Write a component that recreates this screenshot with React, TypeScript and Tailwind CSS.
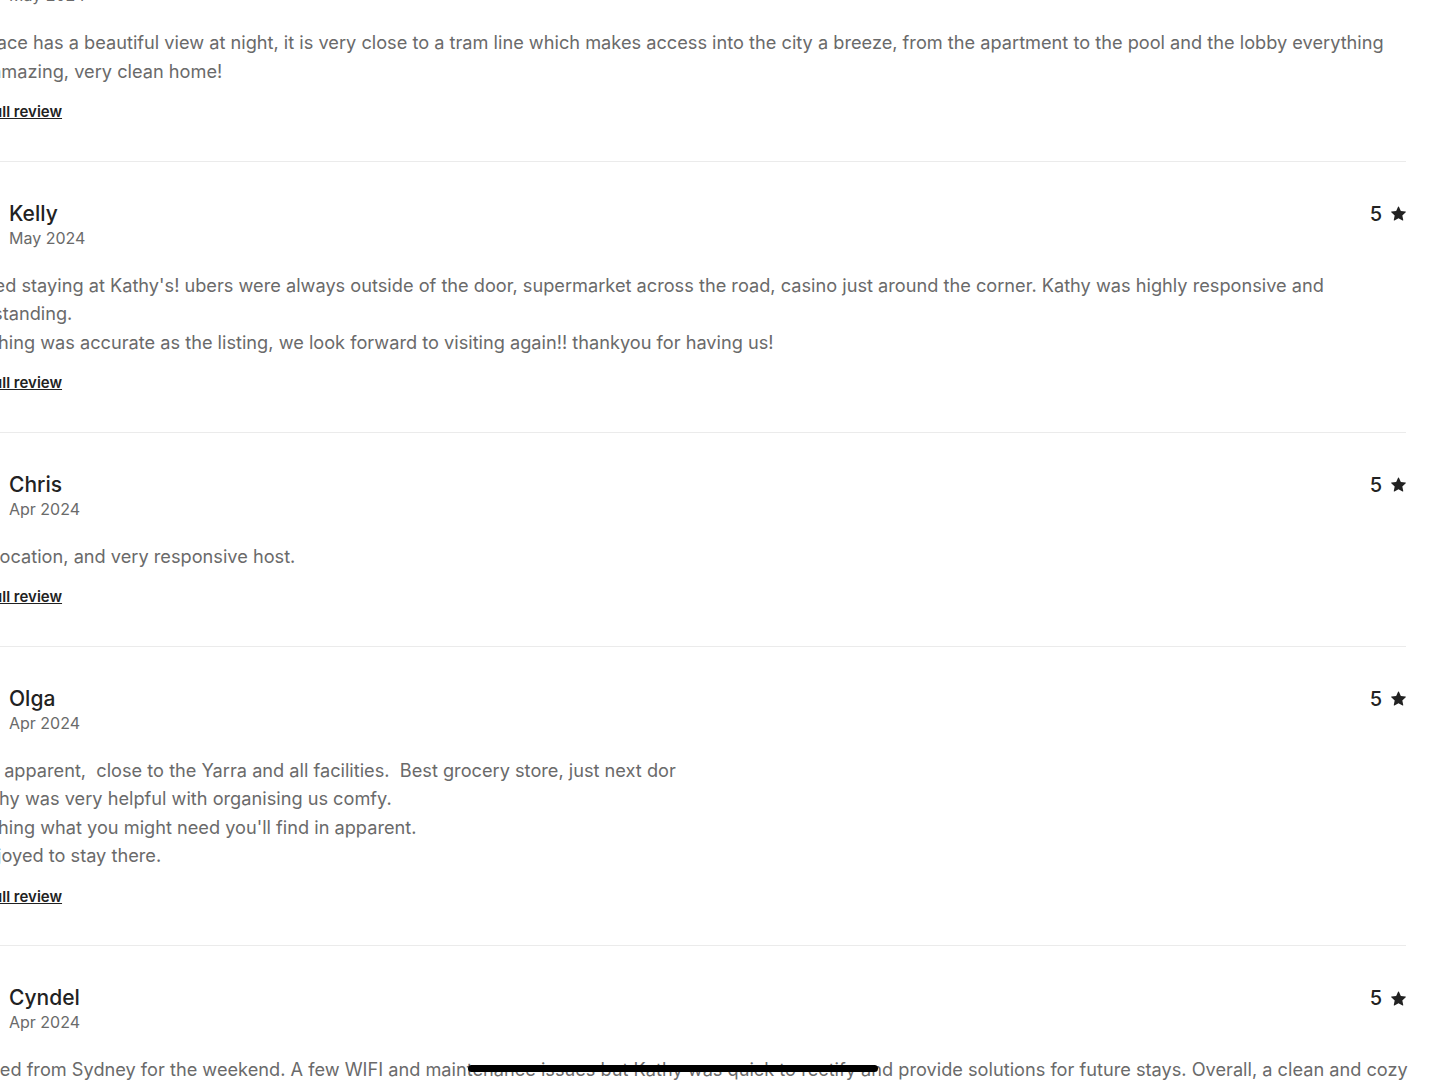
const REVIEWS = [
  {
    name: "Mitchell",
    date: "May 2024",
    rating: 5,
    body: "The place has a beautiful view at night, it is very close to a tram line which makes access into the city a breeze, from the apartment to the pool and the lobby everything\nTruly amazing, very clean home!",
  },
  {
    name: "Kelly",
    date: "May 2024",
    rating: 5,
    body: " Enjoyed staying at Kathy's! ubers were always outside of the door, supermarket across the road, casino just around the corner. Kathy was highly responsive and understanding.\nEverything was accurate as the listing, we look forward to visiting again!! thankyou for having us!",
  },
  {
    name: "Chris",
    date: "Apr 2024",
    rating: 5,
    body: "Great location, and very responsive host.",
  },
  {
    name: "Olga",
    date: "Apr 2024",
    rating: 5,
    body: "Lovely apparent,  close to the Yarra and all facilities.  Best grocery store, just next dor\nSo Kathy was very helpful with organising us comfy.\nEverything what you might need you'll find in apparent.\nWe enjoyed to stay there.",
  },
  {
    name: "Cyndel",
    date: "Apr 2024",
    rating: 5,
    body: "Travelled from Sydney for the weekend. A few WIFI and maintenance issues but Kathy was quick to rectify and provide solutions for future stays. Overall, a clean and cozy apartment with everything we needed for a short stay in the city.",
  },
]

const Star = () => (
  <svg viewBox="0 0 32 32" className="h-[15px] w-[15px] fill-[#222222]">
    <path d="M15.1 1.58l-4.13 8.88-9.86 1.27a1 1 0 0 0-.54 1.74l7.3 6.57-1.97 9.85a1 1 0 0 0 1.48 1.06l8.62-5 8.63 5a1 1 0 0 0 1.48-1.06l-1.97-9.85 7.3-6.57a1 1 0 0 0-.55-1.73l-9.86-1.28-4.12-8.88a1 1 0 0 0-1.82 0z" />
  </svg>
)

const Review = ({ review }: { review: (typeof REVIEWS)[number] }) => (
  <div className="border-b border-[#ebebeb] pt-[39px] pb-[37.5px]">
    <div className="flex items-start justify-between">
      <div className="flex items-center gap-[18px]">
        <div className="h-12 w-12 rounded-full bg-[#dddddd]" />
        <div className="flex flex-col">
          <span className="text-[21px] leading-[26px] font-medium text-[#222222]">
            {review.name}
          </span>
          <span className="text-[16px] leading-[22px] text-[#6a6a6a]">
            {review.date}
          </span>
        </div>
      </div>
      <div className="flex h-[26px] items-center gap-[9px]">
        <span className="text-[20px] font-medium text-[#222222]">{review.rating}</span>
        <Star />
      </div>
    </div>
    <p className="mt-[22px] mr-[-8px] whitespace-pre-wrap text-[18.2px] leading-[28.5px] text-[#6a6a6a]">
      {review.body}
    </p>
    <button className="mt-[16px] block text-[15px] leading-[22px] font-semibold text-[#222222] underline">
      Show full review
    </button>
  </div>
)

export default function App() {
  return (
    <div className="relative h-[1080px] w-[1440px] overflow-hidden bg-white font-['Inter',sans-serif]">
      <div className="ml-[-57px] mt-[-81px] w-[1463px]">
        {REVIEWS.map((review) => (
          <Review key={review.name} review={review} />
        ))}
      </div>
      <div className="absolute left-[468px] top-[1065px] h-[7px] w-[410px] rounded-full bg-black" />
    </div>
  )
}
